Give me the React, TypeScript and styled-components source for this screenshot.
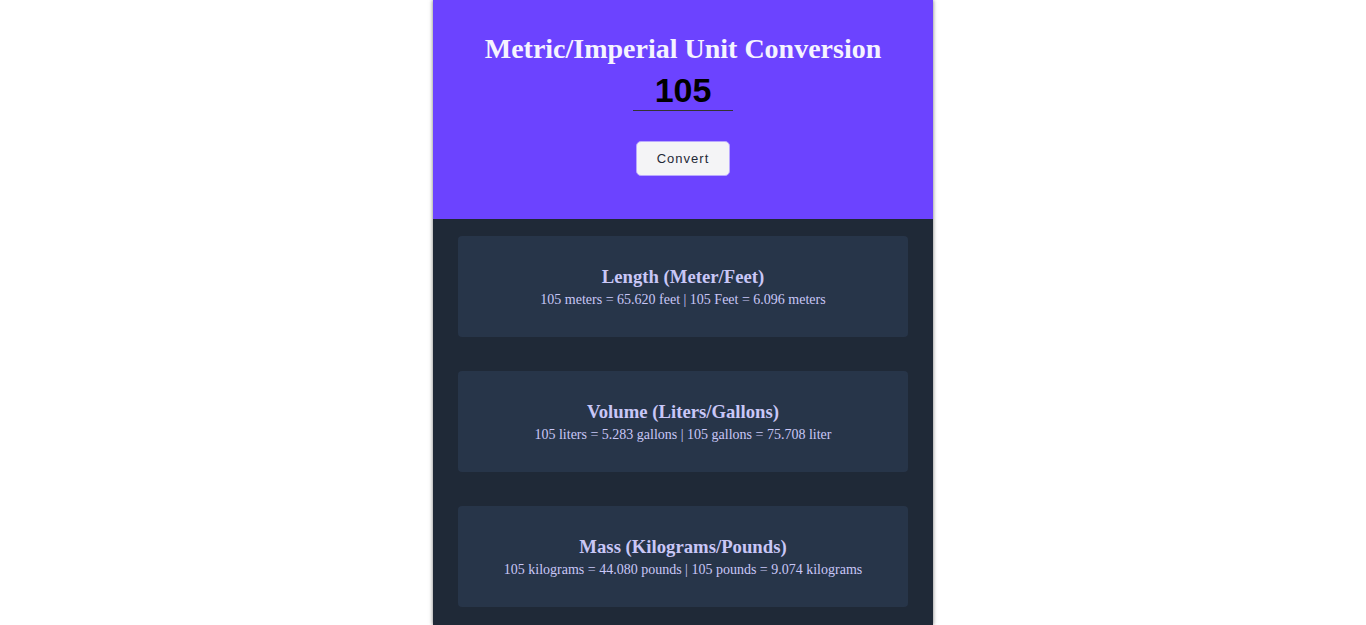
import React, { useState } from 'react';
import styled, { createGlobalStyle } from 'styled-components';

const GlobalStyle = createGlobalStyle`
  html, body {
    margin: 0;
    padding: 0;
    background: #ffffff;
    font-family: "Liberation Serif", "Times New Roman", serif;
  }
`;

const Page = styled.div`
  display: flex;
  justify-content: center;
`;

const Container = styled.div`
  width: 500px;
  min-height: 100vh;
  background: #1f2937;
  box-shadow: 0 0 4px rgba(0, 0, 0, 0.55);
  display: flex;
  flex-direction: column;
`;

const Header = styled.header`
  background: #6c43ff;
  height: 219px;
  box-sizing: border-box;
  padding-top: 33px;
  display: flex;
  flex-direction: column;
  align-items: center;
`;

const Title = styled.h1`
  margin: 0;
  font-size: 28px;
  line-height: 32px;
  font-weight: bold;
  color: #f5f3ff;
`;

const NumberInput = styled.input`
  margin-top: 6px;
  width: 100px;
  box-sizing: border-box;
  padding: 0;
  border: none;
  border-bottom: 1px solid #333;
  background: transparent;
  outline: none;
  text-align: center;
  font-family: "Liberation Sans", Arial, sans-serif;
  font-size: 34px;
  font-weight: bold;
  color: #000;
  line-height: 38px;
  height: 40px;
`;

const ConvertButton = styled.button`
  margin-top: 30px;
  width: 94px;
  height: 35px;
  background: #f4f4f6;
  border: 1px solid #b9a8ff;
  border-radius: 5px;
  font-family: "Liberation Sans", Arial, sans-serif;
  font-size: 13px;
  letter-spacing: 1px;
  color: #1f2937;
  cursor: pointer;
`;

const Results = styled.section`
  padding: 0 25px;
  display: flex;
  flex-direction: column;
`;

const Card = styled.div`
  margin: 17px 0;
  height: 101px;
  box-sizing: border-box;
  background: #273549;
  border-radius: 4px;
  display: flex;
  flex-direction: column;
  align-items: center;
  justify-content: center;
  color: #c9c7f7;
  text-align: center;
`;

const CardTitle = styled.h3`
  margin: 2px 0 0;
  font-size: 18.72px;
  line-height: 22px;
  font-weight: bold;
`;

const CardText = styled.p`
  margin: 3px 0 0;
  font-size: 14px;
  line-height: 18px;
`;

const rows = [
  {
    title: 'Length (Meter/Feet)',
    text: '105 meters = 65.620 feet | 105 Feet = 6.096 meters',
  },
  {
    title: 'Volume (Liters/Gallons)',
    text: '105 liters = 5.283 gallons | 105 gallons = 75.708 liter',
  },
  {
    title: 'Mass (Kilograms/Pounds)',
    text: '105 kilograms = 44.080 pounds | 105 pounds = 9.074 kilograms',
  },
];

const App: React.FC = () => {
  const [value, setValue] = useState('105');

  return (
    <>
      <GlobalStyle />
      <Page>
        <Container>
          <Header>
            <Title>Metric/Imperial Unit Conversion</Title>
            <NumberInput
              type="text"
              value={value}
              onChange={(e) => setValue(e.target.value)}
            />
            <ConvertButton>Convert</ConvertButton>
          </Header>
          <Results>
            {rows.map((r) => (
              <Card key={r.title}>
                <CardTitle>{r.title}</CardTitle>
                <CardText>{r.text}</CardText>
              </Card>
            ))}
          </Results>
        </Container>
      </Page>
    </>
  );
};

export default App;
